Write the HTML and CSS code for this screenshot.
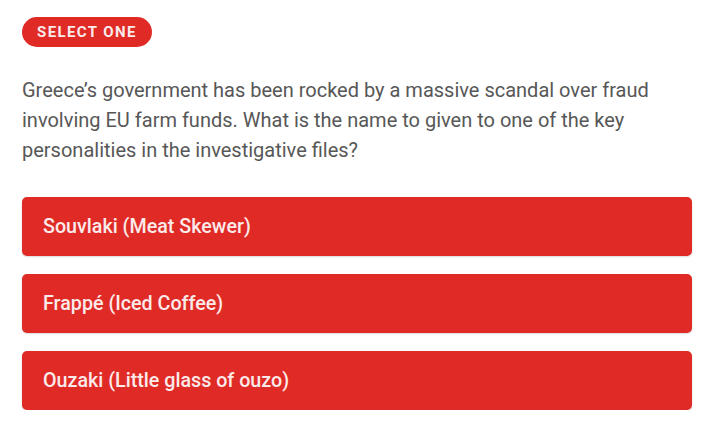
FILE: index.html
```html
<!DOCTYPE html>
<html lang="en">
  <head>
    <meta charset="UTF-8" />
    <meta name="viewport" content="width=device-width, initial-scale=1.0" />
    <title>Quiz</title>
    <link rel="stylesheet" href="styles.css">
  </head>
  <body>
    <div class="quiz">
      <span class="badge">SELECT ONE</span>
      <p class="question">
        Greece’s government has been rocked by a massive scandal over fraud
        involving EU farm funds. What is the name to given to one of the key
        personalities in the investigative files?
      </p>
      <div class="answers">
        <button class="answer">Souvlaki (Meat Skewer)</button>
        <button class="answer">Frappé (Iced Coffee)</button>
        <button class="answer">Ouzaki (Little glass of ouzo)</button>
      </div>
    </div>
  </body>
</html>
```

FILE: styles.css
```css
body {
  margin: 0;
  background: #ffffff;
  font-family: Roboto, "Liberation Sans", sans-serif;
}
.quiz {
  padding: 17px 17px 0 22px;
}
.badge {
  display: inline-block;
  height: 30px;
  line-height: 30px;
  padding: 0 15px;
  border-radius: 15px;
  background-color: #e02a26;
  color: #fbeaea;
  font-size: 15px;
  font-weight: 700;
  letter-spacing: 1.4px;
}
.question {
  margin: 28px 0 32px;
  font-size: 20px;
  line-height: 30px;
  color: #575757;
}
.answers {
  display: flex;
  flex-direction: column;
  gap: 18px;
}
.answer {
  display: block;
  width: 100%;
  height: 59px;
  padding: 0 20px 0 21px;
  border: none;
  border-radius: 5px;
  background-color: #e02a26;
  color: #fbeaea;
  font-family: Roboto, "Liberation Sans", sans-serif;
  font-size: 19.7px;
  font-weight: 500;
  text-align: left;
  box-shadow: 0 1px 2px rgba(0, 0, 0, 0.15);
}
```
